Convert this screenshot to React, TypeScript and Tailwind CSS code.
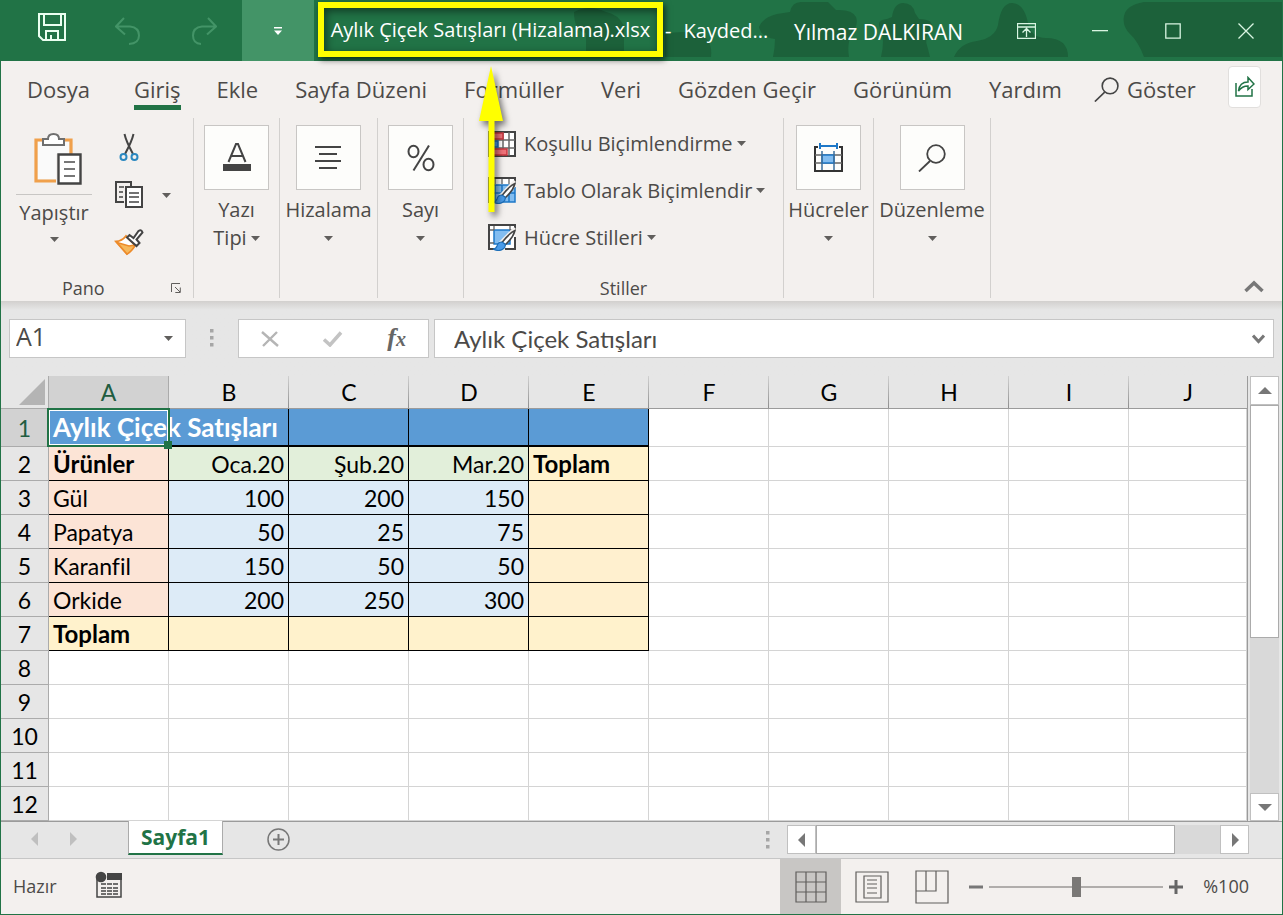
import React, { ReactNode } from "react";

const tabs = ["Ekle", "Sayfa Düzeni", "Formüller", "Veri", "Gözden Geçir", "Görünüm", "Yardım"];
const columns = ["A", "B", "C", "D", "E", "F", "G", "H", "I", "J"];

const rows: string[][] = [
  ["Aylık Çiçek Satışları"],
  ["Ürünler", "Oca.20", "Şub.20", "Mar.20", "Toplam"],
  ["Gül", "100", "200", "150"],
  ["Papatya", "50", "25", "75"],
  ["Karanfil", "150", "50", "50"],
  ["Orkide", "200", "250", "300"],
  ["Toplam"],
  [],
  [],
  [],
  [],
  [],
];

function cellClass(r: number, c: number): string {
  if (c > 4 || r > 6) return "border-r border-b border-[#d4d4d4] bg-white";
  if (r === 0) {
    if (c === 0) return "relative z-10 border-b-2 border-black bg-[#5b9bd5] text-[26px] font-bold text-white";
    return "border-r border-b-2 border-black bg-[#5b9bd5]";
  }
  if (r === 6) return "border-r border-b border-black bg-[#fff2cc] text-[24px] font-bold";
  if (c === 4) return r === 1 ? "border-r border-b border-black bg-[#fff2cc] text-[24px] font-bold" : "border-r border-b border-black bg-[#fff0cf]";
  if (c === 0) return r === 1 ? "border-r border-b border-black bg-[#fce4d6] text-[24px] font-bold" : "border-r border-b border-black bg-[#fce4d6]";
  if (r === 1) return "border-r border-b border-black bg-[#e2efda] text-right";
  return "border-r border-b border-black bg-[#ddebf7] text-right";
}

function Caret() {
  return (
    <svg width="9" height="5" viewBox="0 0 9 5" className="inline-block shrink-0" aria-hidden="true">
      <path d="M0 0h9L4.500 5z" fill="#605e5c" />
    </svg>
  );
}

function TitleBackdrop() {
  return (
    <svg className="absolute top-0 right-0" width="760" height="61" viewBox="522 0 760 61" fill="#1c613a" aria-hidden="true">
      <path d="M574 12q15-8 32 0q12 2 18 14v31h-38v-24q-12-2-12-21z" />
      <path d="M665 34q18-4 34 0q14 5 12 23h-46z" />
      <path d="M773 57q2-10 2-18q-14-2-16-12q3-9 18-13l13-2q2-10 11-10h27l8 8q16-1 20 7q3 8-5 19q-4 8-2 21z" />
      <path d="M881 57q4-16 0-27q-6-10 6-11l5-2q2-14 11-14q10 0 12 10l4 6q16 0 12 10q-8 8-3 20l2 8z" />
      <path d="M954 57q6-14 23-16q18-3 21-16q3-22 14-22q12 0 16 20q3 15 18 15q22 0 22 19z" />
      <path d="M1144 57q-6-16-14-23q-8-8-6-18q2-11 20-14h138v55z" />
    </svg>
  );
}

function PasteIcon() {
  return (
    <svg width="48" height="54" viewBox="0 0 48 54" fill="none" aria-hidden="true">
      <path d="M8 8H2v41h20M31 8h6v14" stroke="#f0a04b" strokeWidth="3.200" />
      <path d="M4 10h31v12H22v25H4z" fill="#fafafa" />
      <path d="M9 13V7h5q0-5 5.500-5T25 7h5v6z" fill="#fff" stroke="#6f6f6f" strokeWidth="2" />
      <path d="M24.500 22.500h22v29h-22z" fill="#fff" stroke="#444" strokeWidth="2.400" />
      <path d="M30 30h11M30 37h11M30 44h11" stroke="#777" strokeWidth="2" />
    </svg>
  );
}

function CutIcon() {
  return (
    <svg width="20" height="30" viewBox="0 0 20 30" fill="none" aria-hidden="true">
      <path d="M5.500 2Q7 9 14 22M14.500 2Q13 9 6 22" stroke="#444" strokeWidth="2" />
      <circle cx="4.500" cy="25" r="3" stroke="#2b88c0" strokeWidth="2" />
      <circle cx="15.500" cy="25" r="3" stroke="#2b88c0" strokeWidth="2" />
    </svg>
  );
}

function CopyIcon() {
  return (
    <svg width="30" height="30" viewBox="0 0 30 30" fill="none" stroke="#444" aria-hidden="true">
      <path d="M10 22H2V2h15v4" strokeWidth="2" />
      <path d="M12 7h16v20H12z" fill="#fff" strokeWidth="2" />
      <path d="M5 7h5M5 12h4M5 17h4M15 13h10M15 17h10M15 22h10" strokeWidth="1.500" />
    </svg>
  );
}

function BrushIcon() {
  return (
    <svg width="30" height="28" viewBox="0 0 30 28" fill="none" aria-hidden="true">
      <path d="M12 8q-4 5-10 5.500L13 26q6-4 8-9z" fill="#fff" stroke="#ed8b2b" strokeWidth="2" />
      <path d="M3 14.500l12 3.500l6-1q-3 6-8 9z" fill="#f6b95c" stroke="#ed8b2b" strokeWidth="1.400" />
      <path d="M13 9.500l2.500-2.500l4 3l5-7q3-2 4 1.500l-6 7l3 3.500l-3 3z" fill="#fff" stroke="#444" strokeWidth="2" />
    </svg>
  );
}

function RulesIcon() {
  return (
    <svg width="28" height="26" viewBox="0 0 28 26" fill="none" aria-hidden="true">
      <path d="M1 1h26v24H1z" fill="#fff" stroke="#444" strokeWidth="2" />
      <path d="M21 1v24M15 1v24M1 9h26M1 17h26" stroke="#666" strokeWidth="1.500" />
      <path d="M2 2h13v6H2zM2 18h17v6H2z" fill="#f0737a" stroke="#c8373f" strokeWidth="1.500" />
      <path d="M2 10h8v6H2z" fill="#4a9be8" stroke="#1e6fb8" strokeWidth="1.500" />
    </svg>
  );
}

function StyleIcon({ table }: { table?: boolean }) {
  return (
    <svg width="28" height="27" viewBox="0 0 28 27" fill="none" aria-hidden="true">
      <path d="M1 1h26v24H1z" fill="#fff" />
      {table ? (
        <>
          <path d="M7 8h20v17H7z" fill="#83bdf0" stroke="#1e78c8" strokeWidth="1.500" />
          <path d="M7 16h20M14 8v17M21 8v17" stroke="#1e78c8" strokeWidth="1.500" />
          <path d="M14 1v6M21 1v6M1 8h6M1 16h6M7 1v6" stroke="#666" strokeWidth="1.300" />
        </>
      ) : (
        <>
          <path d="M6 6h16v14H6z" fill="#83bdf0" stroke="#1e78c8" strokeWidth="1.500" />
          <path d="M6 1v5M22 1v5M1 6h5M22 6h5M1 19h5" stroke="#666" strokeWidth="1.300" />
        </>
      )}
      <path d={table ? "M27 6V1H1v24h5" : "M27 6V1H1v24h5M27 13v12H17"} stroke="#444" strokeWidth="2" />
      <path d="M28 5L13 20" stroke="#f3f0ee" strokeWidth="6" />
      <path d="M27 6.500q-5 2-13 12l3 2.500q8-7 10-14.500z" fill="#fff" stroke="#444" strokeWidth="1.600" />
      <path d="M14 18q-4 0-5 4q-1 3-4 3q6 3 10 0q3-2 2-5z" fill="#4a9be8" stroke="#1e6fb8" strokeWidth="1.200" />
    </svg>
  );
}

function CellsIcon() {
  return (
    <svg width="29" height="30" viewBox="0 0 29 30" fill="none" aria-hidden="true">
      <path d="M4 4H1v24h27V4h-3" stroke="#333" strokeWidth="2" />
      <path d="M1 12h27M1 20h27" stroke="#666" strokeWidth="1.500" />
      <path d="M8 12h12v8H8z" fill="#83bdf0" stroke="#1e78c8" strokeWidth="1.500" />
      <path d="M6 3h17M6 0v6M23 0v6" stroke="#1e78c8" strokeWidth="2" />
      <path d="M8 8v19M20 8v19" stroke="#3c6f9c" strokeWidth="1.500" />
    </svg>
  );
}

function SearchIcon({ size }: { size: number }) {
  return (
    <svg width={size} height={size} viewBox="0 0 28 28" fill="none" stroke="#444" strokeWidth="1.800" aria-hidden="true">
      <circle cx="18" cy="10" r="8.800" />
      <path d="M12 17L1 27.500" />
    </svg>
  );
}

function BigGroup({ icon, label, width }: { icon: ReactNode; label: ReactNode; width: string }) {
  return (
    <div className={`flex h-[180px] shrink-0 justify-center border-r border-[#d2d0ce] ${width}`}>
      <button type="button" className="flex flex-col items-center whitespace-nowrap pt-[7px]">
        <span className="flex size-[65px] items-center justify-center border border-[#c8c6c4] bg-[#fdfdfb]">{icon}</span>
        <span className="mt-1.5 flex flex-col items-center text-[20px] leading-7">{label}</span>
      </button>
    </div>
  );
}

function Labelled({ text }: { text: string }) {
  return (
    <>
      <span>{text}</span>
      <span className="flex h-7 items-center"><Caret /></span>
    </>
  );
}

function StyleButton({ icon, text }: { icon: ReactNode; text: string }) {
  return (
    <button type="button" className="flex h-[47px] items-center gap-2 whitespace-nowrap text-[20px]">
      {icon}
      <span>{text}</span>
      <span className="-ml-1 flex"><Caret /></span>
    </button>
  );
}

function Arrow({ d, color = "#777" }: { d: "up" | "down" | "left" | "right"; color?: string }) {
  const paths = { up: "M1 11L8 4l7 7z", down: "M1 5h14l-7 7z", left: "M11 1v14L4 8z", right: "M5 1v14l7-7z" };
  return (
    <svg width="16" height="16" viewBox="0 0 16 16" aria-hidden="true"><path d={paths[d]} fill={color} /></svg>
  );
}

function Dots() {
  return (
    <svg width="4" height="18" viewBox="0 0 4 18" fill="#a6a6a6" aria-hidden="true">
      <path d="M0 0h3.500v3.500H0zM0 7h3.500v3.500H0zM0 14h3.500v3.500H0z" />
    </svg>
  );
}

export default function App() {
  return (
    <div className="relative flex min-h-screen flex-col border border-t-0 border-[#217346] bg-[#e6e6e6] font-['Open_Sans','Noto_Sans',sans-serif] text-[#4c4a48]">
      <header className="relative flex h-[61px] items-center bg-[#217346] text-white">
        <TitleBackdrop />
        <div className="relative flex h-full pl-[13px]">
          <button type="button" aria-label="Kaydet" className="flex w-[76px] items-center justify-center pb-2">
            <svg width="28" height="28" viewBox="0 0 28 28" fill="none" stroke="#eafff0" strokeWidth="2">
              <path d="M1 1h26v26H5l-4-4zM6 1v11h17V1M8 27v-9h12v9M13 22v5" />
            </svg>
          </button>
          <button type="button" aria-label="Geri Al" className="flex w-[76px] items-center justify-center">
            <svg width="26" height="28" viewBox="0 0 26 28" fill="none" stroke="#439467" strokeWidth="2">
              <path d="M9 1L1 9.500l9 8M1 9.500h14q9 1 9 9t-10 8.500" />
            </svg>
          </button>
          <button type="button" aria-label="Yinele" className="flex w-[76px] items-center justify-center">
            <svg width="26" height="28" viewBox="0 0 26 28" fill="none" stroke="#439467" strokeWidth="2">
              <path d="M17 1l8 8.500l-9 8M25 9.500H11q-9 1-9 9t8 8.500" />
            </svg>
          </button>
          <button type="button" aria-label="Hızlı Erişim Araç Çubuğunu Özelleştir" className="flex w-[72px] items-center justify-center bg-[#439467]">
            <svg width="8" height="8" viewBox="0 0 8 8" fill="#fff"><path d="M0 0h8v1.500H0zM0 3.500h8L4 8z" /></svg>
          </button>
        </div>
        <h1 className="relative mt-0.5 ml-1 flex h-[55px] w-[345px] shrink-0 items-center justify-center self-start border-[6px] border-[#ffff00] text-[20px] whitespace-nowrap shadow-[2px_3px_6px_rgba(0,0,0,0.6),inset_2px_3px_8px_rgba(0,0,0,0.5)]">
          Aylık Çiçek Satışları (Hizalama).xlsx
        </h1>
        <span className="relative ml-0.5 text-[20px]">-</span>
        <span className="relative ml-3 text-[20px]">Kayded...</span>
        <span className="relative mt-1 mr-[27px] ml-auto text-[21px] whitespace-nowrap">Yılmaz DALKIRAN</span>
        <div className="relative flex h-full">
          <button type="button" aria-label="Şerit Görüntüleme Seçenekleri" className="flex w-[73px] items-center justify-center">
            <svg width="19" height="16" viewBox="0 0 19 16" fill="none" stroke="#d9f5e2"><path d="M.5.500h18v15H.5zM.5 4h18M9.500 14V6M5.500 9.500l4-4l4 4" strokeWidth="1.300" /></svg>
          </button>
          <button type="button" aria-label="Simge Durumuna Küçült" className="flex w-[73px] items-center justify-center">
            <svg width="16" height="2" viewBox="0 0 16 2"><path d="M0 0h16v1.300H0z" fill="#d9f5e2" /></svg>
          </button>
          <button type="button" aria-label="Ekranı Kapla" className="flex w-[73px] items-center justify-center">
            <svg width="16" height="16" viewBox="0 0 16 16" fill="none" stroke="#d9f5e2" strokeWidth="1.300"><path d="M.8.800h14.400v14.400H.8z" /></svg>
          </button>
          <button type="button" aria-label="Kapat" className="flex w-[73px] items-center justify-center">
            <svg width="16" height="16" viewBox="0 0 16 16" fill="none" stroke="#d9f5e2" strokeWidth="1.300"><path d="M.5.500l15 15M15.500.500l-15 15" /></svg>
          </button>
        </div>
      </header>

      <nav className="flex h-[57px] items-center bg-[#f3f0ee] pr-[21px] pl-[26px] text-[22px] whitespace-nowrap">
        <button type="button">Dosya</button>
        <button type="button" className="relative ml-11">
          Giriş
          <span className="absolute inset-x-0 top-8 h-[5px] bg-[#217346]" />
        </button>
        <div className="ml-9 flex gap-[37px]">
          {tabs.map((t) => (
            <button type="button" key={t}>{t}</button>
          ))}
        </div>
        <button type="button" className="ml-8 flex items-center gap-2"><SearchIcon size={25} />Göster</button>
        <button type="button" aria-label="Paylaş" className="mb-1.5 ml-auto flex h-[42px] w-[33px] shrink-0 items-center justify-center rounded-sm border border-[#e1dfdd] bg-white">
          <svg width="20" height="21" viewBox="0 0 20 21" fill="none" stroke="#217346" strokeWidth="1.500">
            <path d="M1 7v13h16v-7M3.500 15q1-9 9.500-9V1.500l6 6.500l-6 5.500V10q-6 0-9.500 5z" />
          </svg>
        </button>
      </nav>

      <section aria-label="Giriş şeridi" className="relative flex h-[183px] bg-[#f3f0ee]">
        <div className="relative flex h-[180px] w-[193px] shrink-0 flex-col border-r border-[#d2d0ce]">
          <div className="flex pt-3.5 pl-[15px]">
            <button type="button" className="flex w-[76px] flex-col items-center text-[20px]">
              <span className="flex w-full justify-center border-b border-[#c8c6c4] pb-2 pl-2"><PasteIcon /></span>
              <span className="mt-1.5 leading-6">Yapıştır</span>
              <span className="flex h-7 items-center"><Caret /></span>
            </button>
            <div className="ml-[22px] flex flex-col items-center gap-[18px]">
              <button type="button" aria-label="Kes"><CutIcon /></button>
              <button type="button" aria-label="Kopyala"><CopyIcon /></button>
              <button type="button" aria-label="Biçim Boyacısı"><BrushIcon /></button>
            </div>
            <button type="button" aria-label="Kopyala seçenekleri" className="mt-[50px] ml-[18px] h-5 self-start"><Caret /></button>
          </div>
          <div className="mt-auto -mb-0.5 flex items-center justify-center text-[18px] leading-6">
            <span className="ml-[61px] flex-1">Pano</span>
            <button type="button" aria-label="Pano ayarları" className="mr-3">
              <svg width="10" height="10" viewBox="0 0 10 10" fill="none" stroke="#605e5c"><path d="M.5 9V.500H9M4 4l5 5M9.300 4.500v5h-5" /></svg>
            </button>
          </div>
        </div>
        <BigGroup
          width="w-[86px]"
          icon={
            <svg width="30" height="32" viewBox="0 0 30 32" fill="none" stroke="#444" strokeWidth="2">
              <path d="M6.500 20L14 2h2l7.500 18M9.500 14h11" />
              <path d="M1 22h28v7H1z" fill="#444" stroke="none" />
            </svg>
          }
          label={<><span>Yazı</span><span className="flex items-center gap-1">Tipi <Caret /></span></>}
        />
        <BigGroup
          width="w-[98px]"
          icon={
            <svg width="26" height="24" viewBox="0 0 26 24" stroke="#444" strokeWidth="2"><path d="M0 1h26M4 8h18M0 15h26M4 22h18" /></svg>
          }
          label={<Labelled text="Hizalama" />}
        />
        <BigGroup
          width="w-[86px]"
          icon={
            <svg width="28" height="28" viewBox="0 0 28 28" fill="none" stroke="#444" strokeWidth="2">
              <ellipse cx="6.500" cy="7.500" rx="5" ry="5.800" />
              <ellipse cx="21.500" cy="20.500" rx="5" ry="5.800" />
              <path d="M22 1.500L6.500 26.500" />
            </svg>
          }
          label={<Labelled text="Sayı" />}
        />
        <div className="flex h-[180px] w-[320px] shrink-0 flex-col border-r border-[#d2d0ce] pt-0.5 pl-6">
          <StyleButton icon={<RulesIcon />} text="Koşullu Biçimlendirme" />
          <StyleButton icon={<StyleIcon table />} text="Tablo Olarak Biçimlendir" />
          <StyleButton icon={<StyleIcon />} text="Hücre Stilleri" />
          <span className="mt-auto mr-6 -mb-0.5 text-center text-[18px] leading-6">Stiller</span>
        </div>
        <BigGroup width="w-[90px]" icon={<CellsIcon />} label={<Labelled text="Hücreler" />} />
        <BigGroup width="w-[117px]" icon={<SearchIcon size={28} />} label={<Labelled text="Düzenleme" />} />
        <button type="button" aria-label="Şeridi Daralt" className="mr-[18px] mb-2 ml-auto self-end">
          <svg width="20" height="13" viewBox="0 0 20 13" fill="none" stroke="#777" strokeWidth="3.500"><path d="M1.500 11L10 3l8.500 8" /></svg>
        </button>
      </section>

      <div className="flex h-[75px] items-start bg-linear-to-b from-[#d2d0ce] to-[#e6e6e6] to-12% px-2 pt-[18px]">
        <div className="flex h-[39px] w-[177px] shrink-0 items-center border border-[#c6c6c6] bg-white">
          <input aria-label="Ad Kutusu" defaultValue="A1" className="w-0 flex-1 bg-transparent pb-1 pl-1.5 text-[25px] outline-none" />
          <button type="button" aria-label="Ad listesi" className="mr-3 flex"><Caret /></button>
        </div>
        <span className="mt-2.5 ml-6 shrink-0"><Dots /></span>
        <div className="ml-6 flex h-[39px] w-[191px] shrink-0 items-center justify-around border border-[#c6c6c6] bg-white">
          <button type="button" aria-label="İptal">
            <svg width="18" height="16" viewBox="0 0 18 16" fill="none" stroke="#b5b5b5" strokeWidth="2.400"><path d="M1 1l16 14M16 1L2 15" /></svg>
          </button>
          <button type="button" aria-label="Gir">
            <svg width="20" height="16" viewBox="0 0 20 16" fill="none" stroke="#c3c3c3" strokeWidth="3.500"><path d="M1 8.500l6 5.500L18 1.500" /></svg>
          </button>
          <button type="button" aria-label="İşlev Ekle" className="font-['Liberation_Serif',serif] text-[26px] leading-8 font-bold text-[#666] italic">
            f<span className="text-[20px]">x</span>
          </button>
        </div>
        <div className="ml-[5px] flex h-[39px] flex-1 items-center border border-[#c6c6c6] bg-white">
          <input aria-label="Formül Çubuğu" defaultValue="Aylık Çiçek Satışları" className="w-0 flex-1 bg-transparent pl-[19px] font-['Lato',sans-serif] text-[24px] outline-none" />
          <button type="button" aria-label="Formül Çubuğunu Genişlet" className="mr-2">
            <svg width="13" height="10" viewBox="0 0 13 10" fill="none" stroke="#777" strokeWidth="3"><path d="M1 1.500l5.500 6l5.500-6" /></svg>
          </button>
        </div>
      </div>

      <main className="flex flex-1">
        <div className="min-w-0 flex-1 overflow-hidden border-r border-[#9b9b9b]">
          <table className="w-full table-fixed border-separate border-spacing-0 font-['Lato',sans-serif] text-[23px] leading-7 text-black [font-variant-ligatures:none]">
            <colgroup>
              <col className="w-12" />
              {columns.map((c) => (
                <col key={c} className={c === "J" ? "" : "w-[120px]"} />
              ))}
            </colgroup>
            <thead>
              <tr className="h-[33px]">
                <th className="border-r border-b border-[#ababab] p-0">
                  <svg width="26" height="26" viewBox="0 0 26 26" className="ml-[18px]" aria-hidden="true"><path d="M26 0v26H0z" fill="#b4b4b4" /></svg>
                </th>
                {columns.map((c) => (
                  <th
                    key={c}
                    scope="col"
                    className={
                      c === "A"
                        ? "border-r border-b border-[#ababab] bg-[#d2d2d2] p-0 font-normal text-[#215c40]"
                        : c === "J"
                          ? "border-b border-[#9b9b9b] p-0 font-normal"
                          : "border-b border-[#9b9b9b] bg-[linear-gradient(to_bottom,#d0d0d0,#8f8f8f)] bg-[length:1px_100%] bg-right bg-no-repeat p-0 font-normal"
                    }
                  >
                    {c}
                  </th>
                ))}
              </tr>
            </thead>
            <tbody>
              {rows.map((row, r) => (
                <tr key={r} className={r === 0 ? "h-[38px]" : "h-[34px]"}>
                  <th
                    scope="row"
                    className={
                      r === 0
                        ? "border-r border-b border-[#ababab] bg-[#d2d2d2] p-0 font-normal text-[#215c40]"
                        : "border-r border-b border-[#ababab] p-0 font-normal"
                    }
                  >
                    {r + 1}
                  </th>
                  {columns.map((c, i) => (
                    <td key={c} className={`px-1 py-0 leading-7 whitespace-nowrap ${cellClass(r, i)}`}>
                      {row[i]}
                      {r === 0 && i === 0 && (
                        <span className="absolute -top-px -right-px -bottom-0.5 -left-0.5 border-2 border-[#217346] outline-1 -outline-offset-3 outline-white">
                          <span className="absolute -right-1 -bottom-1 size-2 bg-[#217346]" />
                        </span>
                      )}
                    </td>
                  ))}
                </tr>
              ))}
            </tbody>
          </table>
        </div>
        <div className="mr-[3px] ml-0.5 flex w-[29px] shrink-0 flex-col bg-[#d9d9d9]">
          <button type="button" aria-label="Yukarı kaydır" className="flex h-[29px] items-center justify-center border border-[#c0c0c0] bg-white"><Arrow d="up" /></button>
          <div className="h-[233px] border border-[#ababab] bg-white" />
          <button type="button" aria-label="Aşağı kaydır" className="mt-auto flex h-[28px] items-center justify-center border border-[#c0c0c0] bg-white"><Arrow d="down" /></button>
        </div>
      </main>

      <div className="flex h-[38px] items-start border-t border-b border-t-[#9b9b9b] border-b-[#c6c6c6] pr-[33px]">
        <button type="button" aria-label="Önceki sayfa" className="mt-[9px] ml-[26px]"><Arrow d="left" color="#bfbfbf" /></button>
        <button type="button" aria-label="Sonraki sayfa" className="mt-[9px] ml-[22px]"><Arrow d="right" color="#bfbfbf" /></button>
        <button type="button" className="-mt-px ml-[47px] flex h-[34px] w-[95px] items-center justify-center border-x border-b-2 border-x-[#ababab] border-b-[#217346] bg-white text-[21px] leading-8 font-bold text-[#217346]">Sayfa1</button>
        <button type="button" aria-label="Yeni sayfa" className="mt-1.5 ml-11">
          <svg width="23" height="23" viewBox="0 0 23 23" fill="none" stroke="#777" strokeWidth="1.500"><circle cx="11.500" cy="11.500" r="10.500" /><path d="M11.500 6v11M6 11.500h11" strokeWidth="2" /></svg>
        </button>
        <span className="mt-[9px] ml-auto"><Dots /></span>
        <div className="mt-[3px] ml-[17px] flex h-[29px] w-[462px] bg-[#d9d9d9]">
          <button type="button" aria-label="Sola kaydır" className="flex w-[29px] items-center justify-center border border-[#c0c0c0] bg-white"><Arrow d="left" /></button>
          <div className="w-[359px] border border-[#ababab] bg-white" />
          <button type="button" aria-label="Sağa kaydır" className="ml-auto flex w-[29px] items-center justify-center border border-[#c0c0c0] bg-white"><Arrow d="right" /></button>
        </div>
      </div>

      <footer className="flex h-[55px] items-center bg-[#f3f0ee] pr-[33px] text-[18px]">
        <span className="ml-3">Hazır</span>
        <button type="button" aria-label="Makro Kaydet" className="ml-[38px] pb-1">
          <svg width="28" height="28" viewBox="0 0 28 28" fill="none" stroke="#444">
            <path d="M2 8v18h24V3" strokeWidth="1.500" />
            <path d="M12 2h15v7H12z" fill="#444" stroke="none" />
            <circle cx="6" cy="6" r="5.300" fill="#444" stroke="none" />
            <path d="M6 13h17M6 17h17M6 20h17M6 23h17" strokeWidth="1.300" strokeDasharray="5 1" />
          </svg>
        </button>
        <button type="button" aria-label="Normal" className="ml-auto flex h-full w-[61px] items-center justify-center bg-[#c8c6c4]">
          <svg width="32" height="32" viewBox="0 0 32 32" fill="none" stroke="#605e5c" strokeWidth="1.200"><path d="M1 1h30v30H1zM11 1v30M21 1v30M1 11h30M1 21h30" /></svg>
        </button>
        <button type="button" aria-label="Sayfa Düzeni görünümü" className="flex w-[61px] justify-center">
          <svg width="34" height="32" viewBox="0 0 34 32" fill="none" stroke="#605e5c" strokeWidth="1.200"><path d="M1 1h32v30H1zM9 5h17v22H9zM12 9h10M12 13h10M12 17h10M12 22h10" /></svg>
        </button>
        <button type="button" aria-label="Sayfa Sonu Önizleme" className="flex w-[59px] justify-center">
          <svg width="34" height="34" viewBox="0 0 34 34" fill="none" stroke="#605e5c" strokeWidth="1.200"><path d="M1 1h32v32H1zM11 1v20M21 1v20H1" /></svg>
        </button>
        <button type="button" aria-label="Uzaklaştır" className="ml-2">
          <svg width="14" height="14" viewBox="0 0 14 14"><path d="M0 5.500h14v3H0z" fill="#777" /></svg>
        </button>
        <input
          type="range"
          aria-label="Yakınlaştırma"
          min={0}
          max={100}
          defaultValue={50}
          className="mx-1.5 h-5 w-[174px] appearance-none bg-transparent [&::-webkit-slider-runnable-track]:h-0.5 [&::-webkit-slider-runnable-track]:bg-[#b0adab] [&::-webkit-slider-thumb]:-mt-[9px] [&::-webkit-slider-thumb]:h-5 [&::-webkit-slider-thumb]:w-[9px] [&::-webkit-slider-thumb]:appearance-none [&::-webkit-slider-thumb]:bg-[#7a7876]"
        />
        <button type="button" aria-label="Yakınlaştır">
          <svg width="14" height="14" viewBox="0 0 14 14"><path d="M0 5.500h5.500V0h3v5.500H14v3H8.500V14h-3V8.500H0z" fill="#666" /></svg>
        </button>
        <span className="ml-5">%100</span>
      </footer>

      <svg className="pointer-events-none absolute top-[60px] left-[470px] overflow-visible drop-shadow-[3px_4px_3px_rgba(0,0,0,0.55)]" width="40" height="156" viewBox="0 0 40 156" aria-hidden="true">
        <path d="M20 6l12 55h-8.500v91h-6V61H8z" fill="#ffff00" />
      </svg>
    </div>
  );
}
